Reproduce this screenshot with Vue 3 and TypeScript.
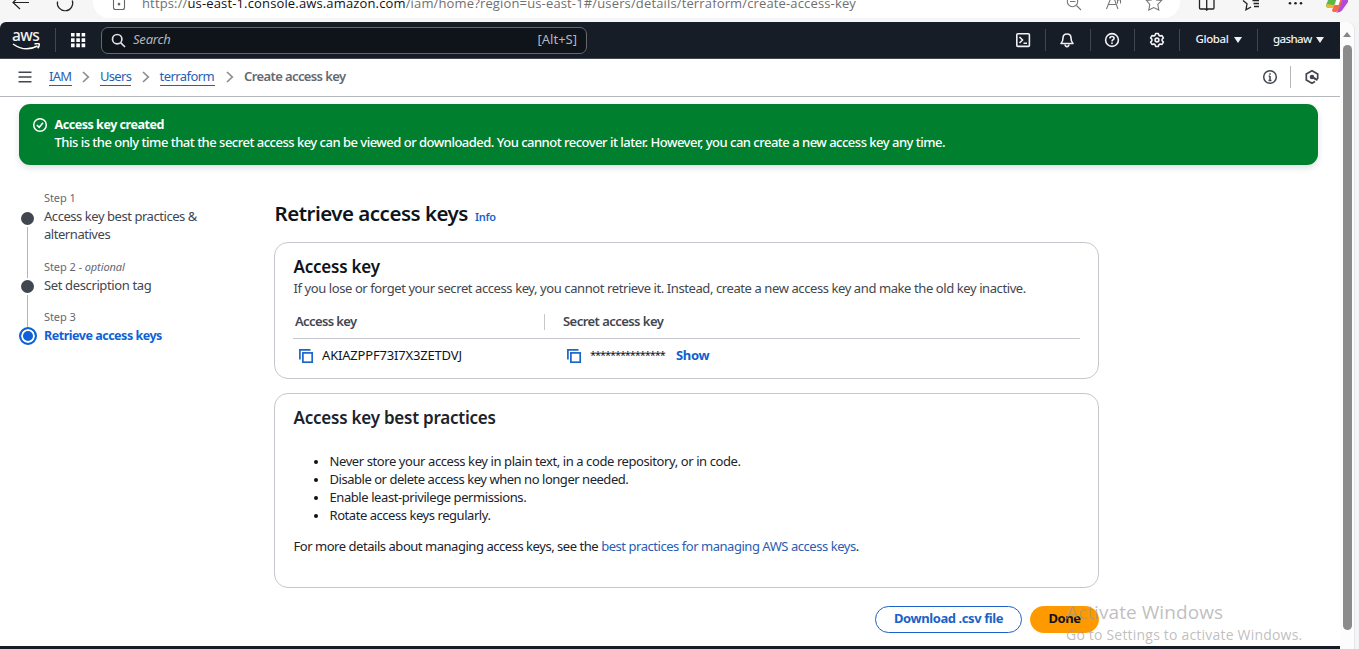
<script setup lang="ts">
interface Step { label: string; optional?: boolean; title: string; active?: boolean }

const crumbs: { text: string; cls: string }[] = [
  { text: 'IAM', cls: 'c-iam' },
  { text: 'Users', cls: 'c-users' },
  { text: 'terraform', cls: 'c-terra' },
]

const steps: Step[] = [
  { label: 'Step 1', title: 'Access key best practices & alternatives' },
  { label: 'Step 2', optional: true, title: 'Set description tag' },
  { label: 'Step 3', title: 'Retrieve access keys', active: true },
]

const practices: { text: string; cls: string }[] = [
  { text: 'Never store your access key in plain text, in a code repository, or in code.', cls: 'p1' },
  { text: 'Disable or delete access key when no longer needed.', cls: 'p2' },
  { text: 'Enable least-privilege permissions.', cls: 'p3' },
  { text: 'Rotate access keys regularly.', cls: 'p4' },
]
</script>

<template>
  <div class="window">
    <div class="browser">
      <svg class="nav-icons" width="93" height="22" viewBox="0 0 93 22" fill="none" stroke="#222" stroke-width="1.2">
        <path d="M13 2.5H29M20 -4.5L13 2.5L20 9" />
        <path d="M57.5 1.5A7.7 7.7 0 1 0 72.3 0.5" />
      </svg>
      <div class="address">
        <svg class="lock" width="16" height="22" viewBox="0 0 16 22" fill="none" stroke="#666" stroke-width="1.1">
          <path d="M2.5 -2V7.5Q2.5 9.5 4.5 9.5H11.5Q13.5 9.5 13.5 7.5V-2" />
          <circle cx="8" cy="4.2" r="0.8" fill="#444" />
        </svg>
        <span class="url">https://<b>us-east-1.console.aws.amazon.com</b>/iam/home?region=us-east-1#/users/details/terraform/create-access-key</span>
        <svg class="addr-icons" width="110" height="22" viewBox="1060 0 110 22" fill="none" stroke="#777" stroke-width="1.1">
          <circle cx="1073.5" cy="1.5" r="5.2" /><path d="M1077.5 5.5L1082 10M1071 1.5H1076.5" />
          <path d="M1107.5 9L1113.5 -6L1119 9M1109.5 4.5H1117.5M1118.500 3.500V-1M1118.500 0.500Q1121.500 -1.500 1121.500 1V3.500" />
          <path d="M1147.500 0.500L1152.300 0L1154.800 -5L1157.300 0L1162.500 0.500L1158.800 4.500L1159.800 10L1154.800 7.500L1149.800 10L1150.800 4.500Z" />
        </svg>
      </div>
      <svg class="tool-icons" width="179" height="22" viewBox="1180 0 179 22" fill="none">
        <g stroke="#222" stroke-width="1.3">
          <path d="M1199.5 -2V8Q1199.5 9 1200.5 9H1205.5L1206.7 10.2L1208 9H1213Q1214 9 1214 8V-2M1206.7 -2V9" />
          <path d="M1243 0.5L1247 3.8L1246 9.8L1251 7M1252.5 0.5H1259M1253.5 3.5H1259M1254 6.5H1259" />
        </g>
        <g fill="#222"><circle cx="1290" cy="3.2" r="1.3" /><circle cx="1295.5" cy="3.2" r="1.3" /><circle cx="1301" cy="3.2" r="1.3" /></g>
        <path d="M1329 -2L1326 5Q1326 8 1329 8H1333L1337 -2Z" fill="#58b947" />
        <path d="M1326.5 4Q1326 8 1329 8H1333L1334 5Z" fill="#f0b62d" />
        <path d="M1337 0L1332 10Q1332 12.5 1336 12L1340 10L1343 0Z" fill="#f36b49" />
        <path d="M1343 -2L1339.500 8Q1338.500 11 1336 12.400Q1341 13 1343 9L1348 2V-2Z" fill="#b24bd8" />
        <path d="M1337 -2L1335 5H1338.500L1341 -2Z" fill="#fff" />
      </svg>
    </div>

    <div class="frame">
      <div class="page">
        <header class="topbar">
          <div class="logo">
            <span class="aws">aws</span>
            <svg class="smile" width="29" height="8" viewBox="0 0 29 8" fill="none" stroke="#fff" stroke-width="1.5">
              <path d="M1 1Q13 9.500 25.500 3M22.500 1Q26 0 27.300 1Q27.500 3 25.700 5.200" />
            </svg>
          </div>
          <svg class="apps" width="16" height="16" viewBox="0 0 16 16" fill="#fff">
            <path d="M1 1h3.600v3.600h-3.600zM6.300 1h3.600v3.600h-3.600zM11.600 1h3.600v3.600h-3.600zM1 6.300h3.600v3.600h-3.600zM6.300 6.300h3.600v3.600h-3.600zM11.600 6.300h3.600v3.600h-3.600zM1 11.600h3.600v3.600h-3.600zM6.300 11.600h3.600v3.600h-3.600zM11.600 11.600h3.600v3.600h-3.600z" />
          </svg>
          <div class="search">
            <svg width="15" height="15" viewBox="0 0 15 15" fill="none" stroke="#dedee3" stroke-width="1.7"><circle cx="6.2" cy="6.2" r="4.7" /><path d="M9.600 9.600L14 14" /></svg>
            <span class="placeholder">Search</span>
            <span class="shortcut">[Alt+S]</span>
          </div>
          <div class="tools">
            <div class="tool t1"><svg width="16" height="16" viewBox="0 0 16 16" fill="none" stroke="#f0f0f5" stroke-width="1.6"><rect x="1.8" y="1.8" width="12.6" height="12.6" rx="1" /><path d="M4.500 5L7.500 8L4.500 11M8.500 11.200H12" /></svg></div>
            <div class="tool t2"><svg width="16" height="16" viewBox="0 0 16 16" fill="none" stroke="#f0f0f5" stroke-width="1.6"><path d="M2 11.500Q4 9.500 4 6Q4 2 8 2Q12 2 12 6Q12 9.500 14 11.500Z" stroke-linejoin="round" /><path d="M6 12.500Q6.200 14.600 8 14.600Q9.800 14.600 10 12.500" /></svg></div>
            <div class="tool t3"><svg width="16" height="16" viewBox="0 0 16 16" fill="none" stroke="#f0f0f5" stroke-width="1.6"><circle cx="8" cy="8" r="6.4" /><path d="M5.900 6.500Q5.900 4.500 8 4.500Q10.100 4.500 10.100 6.300Q10.100 7.300 9 7.800Q8 8.300 8 9.500M8 10.600V12" /></svg></div>
            <div class="tool t4"><svg width="16" height="16" viewBox="0 0 16 16" fill="none" stroke="#f0f0f5" stroke-width="1.6"><path d="M6.700 1.500H9.300L9.900 3.300L11.100 4L13 3.600L14.400 5.900L13.100 7.300V8.700L14.400 10.100L13 12.400L11.100 12L9.900 12.700L9.300 14.500H6.700L6.100 12.700L4.900 12L3 12.400L1.600 10.100L2.900 8.700V7.300L1.600 5.900L3 3.600L4.900 4L6.100 3.300Z" stroke-linejoin="round" /><circle cx="8" cy="8" r="1.9" /></svg></div>
            <div class="tool menu t5"><span>Global</span><i class="caret"></i></div>
            <div class="menu t6"><span>gashaw</span><i class="caret"></i></div>
          </div>
        </header>

        <nav class="crumbs">
          <svg class="burger" width="14" height="12" viewBox="0 0 14 12" stroke="#424650" stroke-width="1.6"><path d="M0.500 1.300H13.500M0.500 6H13.500M0.500 10.700H13.500" /></svg>
          <template v-for="c in crumbs" :key="c.text">
            <a class="crumb" :class="c.cls">{{ c.text }}</a>
            <svg class="chev" width="8" height="12" viewBox="0 0 8 12" fill="none" stroke="#8c8c94" stroke-width="1.7"><path d="M1 1L6.300 6L1 11" /></svg>
          </template>
          <span class="here">Create access key</span>
          <div class="side-tools">
            <svg width="16" height="16" viewBox="0 0 16 16" fill="none" stroke="#424650" stroke-width="1.5"><circle cx="8" cy="8" r="6.3" /><path d="M8 7V11.500M6.700 7.200H8M6.500 11.500H9.500M8 4.300V5.700" /></svg>
            <i class="divider"></i>
            <svg width="16" height="16" viewBox="0 0 16 16" fill="none" stroke="#424650" stroke-width="1.7"><path d="M11 12.600L8 14.200L2.300 11V5L8 1.800L13.700 5V10" /><circle cx="8" cy="8" r="2.3" fill="#424650" stroke="none" /><path d="M8.500 8.300L13.500 11" stroke-width="2" /></svg>
          </div>
        </nav>

        <section class="flash">
          <svg width="16" height="16" viewBox="0 0 16 16" fill="none" stroke="#fff" stroke-width="1.5"><circle cx="8" cy="8" r="6.3" /><path d="M4.800 8L7.200 10.300L11 5.700" /></svg>
          <div>
            <div class="flash-title">Access key created</div>
            <div class="flash-text">This is the only time that the secret access key can be viewed or downloaded. You cannot recover it later. However, you can create a new access key any time.</div>
          </div>
        </section>

        <div class="columns">
          <aside class="wizard">
            <div v-for="s in steps" :key="s.label" class="step" :class="{ active: s.active }">
              <div class="rail"><i class="dot"></i><i v-if="!s.active" class="line"></i></div>
              <div class="step-body">
                <div class="step-label">{{ s.label }}<template v-if="s.optional"> - <em>optional</em></template></div>
                <div class="step-title">{{ s.title }}</div>
              </div>
            </div>
          </aside>

          <main class="main">
            <div class="heading"><h1>Retrieve access keys</h1><a class="info">Info</a></div>

            <section class="card keys">
              <h2>Access key</h2>
              <p class="desc">If you lose or forget your secret access key, you cannot retrieve it. Instead, create a new access key and make the old key inactive.</p>
              <div class="row head"><div class="col1"><span class="first">Access key</span></div><div class="col2"><span class="sec">Secret access key</span></div></div>
              <div class="row data">
                <div class="col1">
                  <svg width="16" height="16" viewBox="0 0 16 16" fill="none" stroke="#1a66c9" stroke-width="1.7"><path d="M1.900 11.500V1.900H12.500" /><rect x="4.9" y="4.9" width="9.3" height="9.3" /></svg>
                  <span class="keyid">AKIAZPPF73I7X3ZETDVJ</span>
                </div>
                <div class="col2">
                  <svg width="16" height="16" viewBox="0 0 16 16" fill="none" stroke="#1a66c9" stroke-width="1.7"><path d="M1.900 11.500V1.900H12.500" /><rect x="4.9" y="4.9" width="9.3" height="9.3" /></svg>
                  <span class="stars">***************</span><a class="show">Show</a>
                </div>
              </div>
            </section>

            <section class="card tips">
              <h2 class="h-tips">Access key best practices</h2>
              <ul><li v-for="p in practices" :key="p.cls"><span :class="p.cls">{{ p.text }}</span></li></ul>
              <p class="more">For more details about managing access keys, see the <a>best practices for managing AWS access keys</a>.</p>
            </section>

            <div class="actions"><button class="btn">Download .csv file</button><button class="btn primary">Done</button></div>
          </main>
        </div>
        <div class="footer"></div>
      </div>
      <div class="scroll"><i class="up"></i><i class="thumb"></i></div>
    </div>

    <div class="watermark"><div class="w1">Activate Windows</div><div class="w2">Go to Settings to activate Windows.</div></div>
  </div>
</template>

<style>
body { margin: 0; overflow: hidden; }
</style>

<style scoped>
* { box-sizing: border-box; }
.window { position: relative; width: 1359px; height: 649px; background: #f3f4f5; overflow: hidden; display: flex; flex-direction: column; font: 13px/18px "Noto Sans", sans-serif; letter-spacing: -0.35px; color: #0f141a; white-space: nowrap; }
svg { display: block; flex: none; }
h1, h2, p, ul { margin: 0; padding: 0; }
.browser { height: 22px; flex: none; display: flex; background: #f6f6f7; }
.address { width: 1087px; height: 18px; background: #fff; border-radius: 0 0 16px 16px; display: flex; overflow: hidden; }
.lock { margin-left: 18px; }
.url { margin: -7px 0 0 15px; font-family: "Open Sans", sans-serif; font-size: 13px; line-height: 20px; letter-spacing: 0.145px; color: #707070; width: 917px; }
.url b { font-weight: 400; color: #111; }
.frame { flex: 1; display: flex; border-right: 4px solid #f3f4f5; min-height: 0; }
.page { width: 1340px; background: #fff; display: flex; flex-direction: column; border-top-left-radius: 6px; overflow: hidden; }
.topbar { height: 37px; flex: none; background: #161d26; border-bottom: 1px solid #424650; display: flex; align-items: center; color: #f0f0f5; }
.logo { width: 56px; height: 24px; border-right: 1px solid #424650; padding-left: 12px; }
.aws { display: block; font: 500 15.5px/15px "Noto Sans", sans-serif; letter-spacing: -0.5px; height: 14px; }
.smile { margin-top: 1px; }
.apps { margin-left: 14px; }
.search { margin-left: 15px; width: 486px; height: 27px; border: 1px solid #656871; border-radius: 7px; background: #0f141a; display: flex; align-items: center; padding: 0 9px; color: #b4b4bb; }
.placeholder { font-style: italic; margin: -2px 0 0 7px; flex: 1; letter-spacing: -0.2px; }
.shortcut { letter-spacing: 0; margin-top: -2px; }
.tools { margin-left: auto; display: flex; align-items: center; font-size: 11.5px; font-weight: 500; }
.tool { height: 22px; border-right: 1px solid #424650; display: flex; align-items: center; }
.t1 { width: 31px; }
.t2 { width: 45px; padding-left: 13px; }
.t3 { width: 44px; padding-left: 13px; }
.t4 { width: 45px; padding-left: 14px; }
.t5 { width: 78px; padding-left: 15.5px; }
.t6 { width: 82px; padding-left: 15px; }
.menu { display: flex; align-items: center; }
.menu span { width: 38px; margin-top: -2px; letter-spacing: -0.4px; }
.t6 span { width: 42.5px; letter-spacing: -0.6px; }
.caret { border: 4px solid transparent; border-top: 6px solid #f0f0f5; border-bottom: 0; }
.crumbs { height: 38px; flex: none; border-bottom: 1px solid #b4b8bc; display: flex; align-items: center; padding-left: 18px; }
.burger { margin: -2px 17px 0 0; }
.crumb { color: #295eb3; border-bottom: 1px solid #295eb3; line-height: 15px; height: 17px; margin-top: -1px; }
.c-iam { width: 22.5px; letter-spacing: -0.7px; }
.c-users { width: 31px; letter-spacing: -0.7px; }
.c-terra { width: 55.5px; letter-spacing: -0.55px; }
.chev { margin: -1px 10px 0 10.5px; }
.c-terra + .chev { margin-right: 10.5px; }
.here { color: #656871; font-weight: 600; letter-spacing: -0.6px; margin-top: -3px; }
.side-tools { display: flex; align-items: center; margin: -1px 20px 0 auto; }
.divider { width: 1px; height: 22px; background: #b4b8bc; margin: 0 13px 0 12px; }
.flash { margin: 7px 22px 0 19px; height: 61px; flex: none; border-radius: 11px; background: #00802f; color: #fff; display: flex; padding: 11px 0 0 13px; box-shadow: 0 3px 6px rgba(15, 20, 60, 0.13); }
.flash svg { margin: 2px 6.5px 0 0; }
.flash-title { font-weight: 700; font-size: 12.5px; line-height: 20px; height: 18px; letter-spacing: -0.46px; }
.flash-text { font-weight: 500; letter-spacing: -0.505px; }
.columns { display: flex; flex: 1; min-height: 0; }
.wizard { width: 274px; flex: none; padding: 24px 0 0 18px; }
.step { display: flex; }
.rail { width: 19px; display: flex; flex-direction: column; align-items: center; padding-top: 22px; }
.dot { width: 13px; height: 13px; border-radius: 50%; background: #424650; flex: none; }
.line { width: 1px; flex: 1; background: #b4b4bb; margin: 2px 0 -20px; }
.step-body { margin-left: 7px; color: #424650; padding-bottom: 14px; width: 170px; white-space: normal; letter-spacing: -0.45px; }
.step-label { font-size: 11px; line-height: 17px; color: #656871; letter-spacing: -0.08px; margin-bottom: 1px; }
.step:first-child .rail { padding-top: 23px; }
.step:first-child .step-body { padding-bottom: 15px; }
.step.active .rail { padding-top: 19px; }
.step.active .dot { width: 18px; height: 18px; border: 2px solid #0f62d6; background: #0f62d6; box-shadow: inset 0 0 0 2px #fff; }
.step:nth-child(2) .step-title { letter-spacing: -0.37px; }
.step.active .step-title { font-weight: 700; font-size: 12.5px; line-height: 20px; letter-spacing: -0.48px; color: #0f62d6; }
.main { width: 825px; }
.heading { display: flex; align-items: baseline; padding: 35px 0 0 0.5px; height: 77px; }
h1 { font-size: 20.5px; line-height: 26px; font-weight: 600; letter-spacing: -0.5px; }
.info { margin-left: 7px; font-size: 11px; font-weight: 600; color: #1a62d0; letter-spacing: -0.3px; }
.card { border: 1px solid #c6c6cd; border-radius: 14px; padding: 13px 18px 0; }
h2 { font-size: 17px; line-height: 22px; font-weight: 600; letter-spacing: -0.23px; padding-left: 0.5px; }
.keys { height: 137px; }
.desc { color: #424650; line-height: 18px; margin-top: 1px; letter-spacing: -0.41px; padding-left: 0.5px; }
.row { display: flex; align-items: center; }
.row > div { display: flex; align-items: center; }
.head { margin-top: 9px; height: 33px; border-bottom: 1px solid #c6c6cd; color: #424650; font-weight: 600; }
.head span { margin-top: -2px; }
.head .col1 { width: 252px; height: 16px; border-right: 1px solid #c6c6cd; padding-left: 2px; }
.head .col2 { padding-left: 18px; }
.first { letter-spacing: -0.62px; }
.sec { letter-spacing: -0.54px; }
.data { height: 34px; }
.data .col1 { width: 268px; padding-left: 5px; }
.data .col2 { padding-left: 5px; }
.data span, .data a { margin-top: -2px; }
.keyid { margin-left: 8px; letter-spacing: -0.18px; }
.stars { margin-left: 8px; width: 75px; font-size: 11px; letter-spacing: -1.08px; }
.show { margin-left: 11px; font-weight: 700; color: #0f5fd0; }
.tips { height: 195px; margin-top: 14px; color: #1b232d; }
ul { list-style: none; margin-top: 23px; padding-left: 36.5px; }
li { display: flex; align-items: center; }
li::before { content: ""; width: 4px; height: 4px; border-radius: 50%; background: #111; margin: 2px 12px 0 -16px; }
.p1 { letter-spacing: -0.41px; }
.p2 { letter-spacing: -0.465px; }
.p3 { letter-spacing: -0.42px; }
.p4 { letter-spacing: -0.45px; }
.more { margin-top: 13px; letter-spacing: -0.46px; padding-left: 0.5px; }
.more a { color: #295eb3; }
.actions { display: flex; justify-content: flex-end; gap: 8px; margin-top: 18px; }
.btn { font: inherit; font-weight: 700; height: 27px; width: 147px; border-radius: 14px; border: 1px solid #1a62c8; background: #fff; color: #1a62c8; letter-spacing: -0.42px; padding: 0 0 3px; }
.btn.primary { width: 69px; background: #ff9900; border-color: #ff9900; color: #0f141a; }
.footer { height: 3px; flex: none; background: #161d26; }
.scroll { width: 15px; background: #fcfcfc; border-right: 1px solid #e6e6e8; display: flex; flex-direction: column; align-items: center; border-top-right-radius: 8px; padding-top: 10px; }
.up { border: 4.5px solid transparent; border-bottom: 5px solid #858585; border-top: 0; }
.thumb { width: 9px; height: 585px; border-radius: 5px; background: #8b8b8b; margin-top: 8px; }
.watermark { position: absolute; left: 1066px; top: 599px; color: rgba(155, 155, 155, 0.65); font-family: "Open Sans", sans-serif; }
.w1 { font-size: 19px; line-height: 26px; letter-spacing: 0.07px; }
.w2 { font-size: 14px; line-height: 20px; letter-spacing: 0.2px; }
</style>
